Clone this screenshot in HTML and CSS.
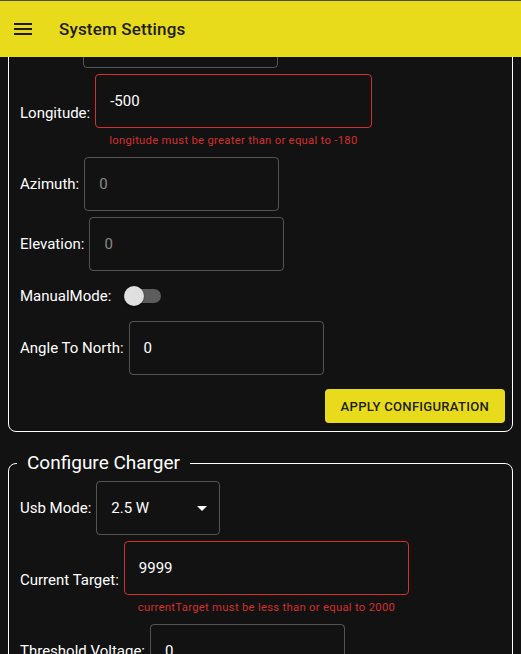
FILE: index.html
```html
<!DOCTYPE html>
<html lang="en">
<head>
<meta charset="utf-8">
<title>System Settings</title>
<link rel="stylesheet" href="styles.css">
</head>
<body>
<header class="appbar">
  <svg class="menu-icon" viewBox="0 0 24 24" aria-hidden="true"><path d="M3 18h18v-2H3v2zm0-5h18v-2H3v2zm0-7v2h18V6H3z"/></svg>
  <h1 class="title">System Settings</h1>
</header>
<main class="content">
  <fieldset class="panel">
    <legend class="panel-title">Configure Tracker</legend>
    <div class="row">
      <span class="label">Latitude:</span>
      <div class="field"><div class="input">0</div></div>
    </div>
    <div class="row">
      <span class="label">Longitude:</span>
      <div class="field">
        <div class="input error">-500</div>
        <div class="helper">longitude must be greater than or equal to -180</div>
      </div>
    </div>
    <div class="row">
      <span class="label">Azimuth:</span>
      <div class="field"><div class="input disabled">0</div></div>
    </div>
    <div class="row">
      <span class="label">Elevation:</span>
      <div class="field"><div class="input disabled">0</div></div>
    </div>
    <div class="row switch-row">
      <span class="label">ManualMode:</span>
      <span class="switch"><span class="switch-track"></span><span class="switch-thumb"></span></span>
    </div>
    <div class="row">
      <span class="label">Angle To North:</span>
      <div class="field"><div class="input">0</div></div>
    </div>
    <div class="actions">
      <button class="btn">Apply Configuration</button>
    </div>
  </fieldset>

  <fieldset class="panel panel-second">
    <legend class="panel-title">Configure Charger</legend>
    <div class="row">
      <span class="label">Usb Mode:</span>
      <div class="field">
        <div class="input select">
          <span>2.5 W</span>
          <svg class="arrow" viewBox="0 0 24 24" aria-hidden="true"><path d="M7 10l5 5 5-5z"/></svg>
        </div>
      </div>
    </div>
    <div class="row">
      <span class="label">Current Target:</span>
      <div class="field">
        <div class="input error">9999</div>
        <div class="helper">currentTarget must be less than or equal to 2000</div>
      </div>
    </div>
    <div class="row">
      <span class="label">Threshold Voltage:</span>
      <div class="field"><div class="input">0</div></div>
    </div>
    <div class="actions">
      <button class="btn">Apply Configuration</button>
    </div>
  </fieldset>
</main>
</body>
</html>
```
FILE: styles.css
```css
html, body {
  margin: 0;
  padding: 0;
}
body {
  background: #121212;
  color: #ffffff;
  font-family: Roboto, "Liberation Sans", sans-serif;
  font-size: 15px;
  height: 654px;
  overflow: hidden;
}
.appbar {
  position: fixed;
  top: 0;
  left: 0;
  right: 0;
  height: 56px;
  border-top: 1px solid #4e4e4e;
  background: #e8db1c;
  color: #1d1d12;
  display: flex;
  align-items: center;
  gap: 24px;
  padding-left: 11px;
  z-index: 10;
}
.menu-icon {
  width: 24px;
  height: 24px;
  fill: currentColor;
  flex: none;
}
.title {
  margin: 0;
  font-size: 17px;
  font-weight: 500;
  letter-spacing: 0.15px;
}
.content {
  margin-top: -15px;
  padding: 0 8px;
}
.panel {
  margin: 0;
  min-width: 0;
  border: 1px solid #ffffff;
  border-radius: 8px;
  padding: 7px 7px 8px 11px;
  display: flex;
  flex-direction: column;
  gap: 6px;
}
.panel-second {
  margin-top: 20px;
}
.panel-title {
  font-size: 19px;
  line-height: 22px;
  padding: 0 10px;
  margin-left: -3px;
}
.row {
  display: flex;
  align-items: center;
  gap: 5px;
}
.label {
  font-size: 15px;
  line-height: 22px;
}
.field {
  display: inline-flex;
  flex-direction: column;
}
.input {
  box-sizing: border-box;
  height: 54px;
  min-width: 195px;
  border: 1px solid rgba(255, 255, 255, 0.28);
  border-radius: 4px;
  padding: 0 14px;
  display: flex;
  align-items: center;
  font-size: 15px;
  color: #ffffff;
}
.input.error {
  border-color: #d32f2f;
}
.input.disabled {
  color: rgba(255, 255, 255, 0.5);
}
.input.select {
  min-width: 124px;
  justify-content: space-between;
  padding-right: 7px;
}
.arrow {
  width: 24px;
  height: 24px;
  fill: #ffffff;
  margin-right: -2px;
}
.helper {
  color: #d32f2f;
  font-size: 11.25px;
  line-height: 20px;
  margin: 3px 14px 0;
  white-space: nowrap;
  letter-spacing: 0.3px;
}
.switch-row {
  min-height: 38px;
}
.switch {
  position: relative;
  width: 37px;
  height: 20px;
  margin-left: 8px;
}
.switch-track {
  position: absolute;
  left: 3px;
  right: 0;
  top: 3px;
  height: 14px;
  border-radius: 7px;
  background: #5c5c5c;
}
.switch-thumb {
  position: absolute;
  left: 0;
  top: 0;
  width: 20px;
  height: 20px;
  border-radius: 50%;
  background: #e0e0e0;
  box-shadow: 0 1px 2px rgba(0, 0, 0, 0.4);
}
.actions {
  display: flex;
  justify-content: flex-end;
  margin-top: 8px;
}
.btn {
  height: 34px;
  padding: 0 16px;
  border: none;
  border-radius: 4px;
  background: #e8db1c;
  color: #1d1d12;
  font-family: Roboto, "Liberation Sans", sans-serif;
  font-size: 13.125px;
  font-weight: 500;
  letter-spacing: 0.25px;
  text-transform: uppercase;
}
```
